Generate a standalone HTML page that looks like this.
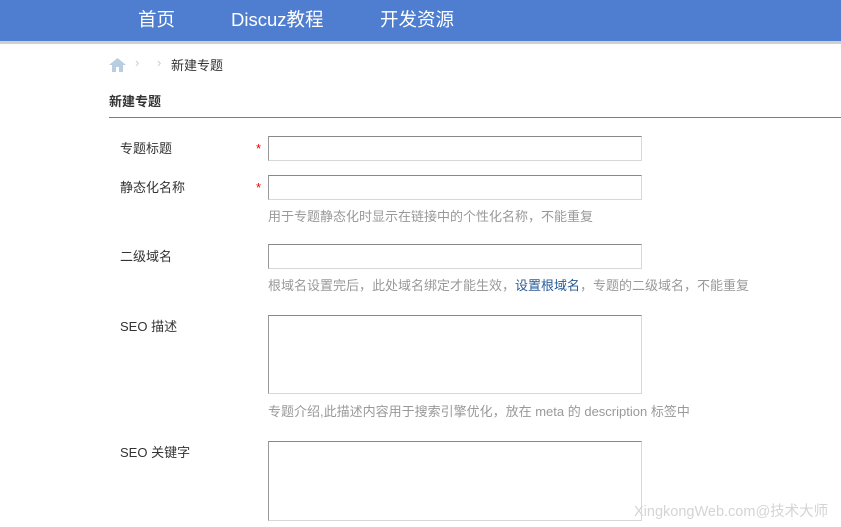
<!DOCTYPE html>
<html><head><meta charset="utf-8"><style>
body{margin:0;width:841px;height:527px;overflow:hidden;background:#fff;font-family:"Liberation Sans","Noto Sans CJK SC",sans-serif;font-size:13px;color:#333;position:relative}
.hd{position:absolute;left:0;top:0;width:841px;height:41px;background:#4f7ed1}
.hl{position:absolute;left:0;top:41px;width:841px;height:3px;background:#cfcfcf}
.nav{position:absolute;top:6px;color:#fff;font-size:18.5px}
.a{position:absolute;white-space:nowrap}
.in{position:absolute;left:268px;width:374px;border:1px solid #d8d8d8;border-top:1px solid #888;border-left:1px solid #999;box-sizing:border-box;background:#fff}
.lb{position:absolute;left:120px;font-size:13px;color:#333}
.st{position:absolute;left:256px;color:#e00;font-size:13px}
.tip{position:absolute;left:268px;color:#999;font-size:13px;white-space:nowrap}
</style></head><body>
<div class="hd"></div><div class="hl"></div>
<div class="nav" style="left:138px">首页</div>
<div class="nav" style="left:231px">Discuz教程</div>
<div class="nav" style="left:380px">开发资源</div>
<svg class="a" style="left:109px;top:58px" width="17" height="14" viewBox="0 0 17 14"><path d="M8.5 0 L17 7 L14 7 L14 14 L10 14 L10 9 L7 9 L7 14 L3 14 L3 7 L0 7Z" fill="#b8cde0"/></svg>
<div class="a" style="left:135px;top:55px;color:#ccc">›</div>
<div class="a" style="left:157px;top:55px;color:#ccc">›</div>
<div class="a" style="left:171px;top:55px">新建专题</div>
<div class="a" style="left:109px;top:91px;font-weight:bold">新建专题</div>
<div class="a" style="left:109px;top:117px;width:732px;height:1px;background:#4a86cf"></div>
<div class="lb" style="top:138px">专题标题</div><div class="st" style="top:141px">*</div>
<div class="in" style="top:136px;height:25px"></div>
<div class="lb" style="top:177px">静态化名称</div><div class="st" style="top:180px">*</div>
<div class="in" style="top:175px;height:25px"></div>
<div class="tip" style="top:206px">用于专题静态化时显示在链接中的个性化名称，不能重复</div>
<div class="lb" style="top:246px">二级域名</div>
<div class="in" style="top:244px;height:25px"></div>
<div class="tip" style="top:275px">根域名设置完后，此处域名绑定才能生效，<span style="color:#2a5c98">设置根域名</span>，专题的二级域名，不能重复</div>
<div class="lb" style="top:316px">SEO 描述</div>
<div class="in" style="top:315px;height:79px"></div>
<div class="tip" style="top:401px">专题介绍,此描述内容用于搜索引擎优化，放在 meta 的 description 标签中</div>
<div class="lb" style="top:442px">SEO 关键字</div>
<div class="in" style="top:441px;height:80px"></div>
<div class="a" style="left:634px;top:500px;color:#d4d4d4;font-size:14.5px">XingkongWeb.com@技术大师</div>
</body></html>
